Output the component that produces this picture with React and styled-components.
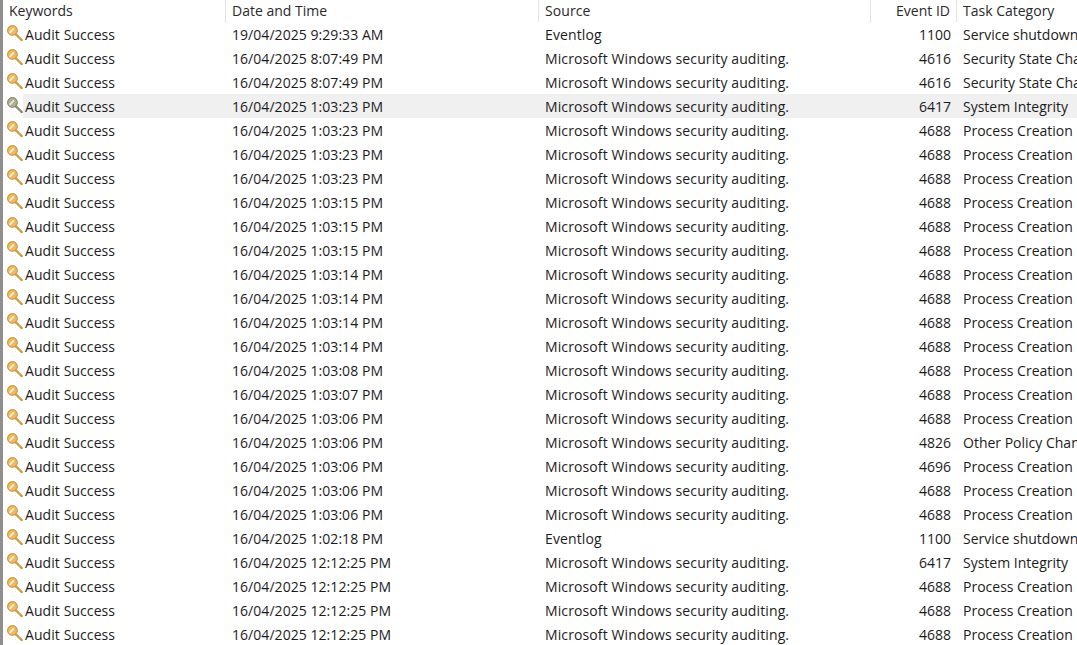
import React from "react";
import styled, { createGlobalStyle } from "styled-components";

const SEC = "Microsoft Windows security auditing.";
const rows = [
  ["19/04/2025 9:29:33 AM", "Eventlog", "1100", "Service shutdown"],
  ["16/04/2025 8:07:49 PM", SEC, "4616", "Security State Change"],
  ["16/04/2025 8:07:49 PM", SEC, "4616", "Security State Change"],
  ["16/04/2025 1:03:23 PM", SEC, "6417", "System Integrity"],
  ["16/04/2025 1:03:23 PM", SEC, "4688", "Process Creation"],
  ["16/04/2025 1:03:23 PM", SEC, "4688", "Process Creation"],
  ["16/04/2025 1:03:23 PM", SEC, "4688", "Process Creation"],
  ["16/04/2025 1:03:15 PM", SEC, "4688", "Process Creation"],
  ["16/04/2025 1:03:15 PM", SEC, "4688", "Process Creation"],
  ["16/04/2025 1:03:15 PM", SEC, "4688", "Process Creation"],
  ["16/04/2025 1:03:14 PM", SEC, "4688", "Process Creation"],
  ["16/04/2025 1:03:14 PM", SEC, "4688", "Process Creation"],
  ["16/04/2025 1:03:14 PM", SEC, "4688", "Process Creation"],
  ["16/04/2025 1:03:14 PM", SEC, "4688", "Process Creation"],
  ["16/04/2025 1:03:08 PM", SEC, "4688", "Process Creation"],
  ["16/04/2025 1:03:07 PM", SEC, "4688", "Process Creation"],
  ["16/04/2025 1:03:06 PM", SEC, "4688", "Process Creation"],
  ["16/04/2025 1:03:06 PM", SEC, "4826", "Other Policy Change Events"],
  ["16/04/2025 1:03:06 PM", SEC, "4696", "Process Creation"],
  ["16/04/2025 1:03:06 PM", SEC, "4688", "Process Creation"],
  ["16/04/2025 1:03:06 PM", SEC, "4688", "Process Creation"],
  ["16/04/2025 1:02:18 PM", "Eventlog", "1100", "Service shutdown"],
  ["16/04/2025 12:12:25 PM", SEC, "6417", "System Integrity"],
  ["16/04/2025 12:12:25 PM", SEC, "4688", "Process Creation"],
  ["16/04/2025 12:12:25 PM", SEC, "4688", "Process Creation"],
  ["16/04/2025 12:12:25 PM", SEC, "4688", "Process Creation"],
];

function KeyIcon({ muted }) {
  const edge = muted ? "#77775f" : "#c28a2e";
  const fill = muted ? "#aeae94" : "#eeb95c";
  const hole = muted ? "#e6e6da" : "#fff0cc";
  return (
    <svg width="17" height="18" viewBox="0 0 17 18">
      <path d="M8.5 9.5 L15.6 16.4" stroke={edge} strokeWidth="2.4" strokeLinecap="round" />
      <path d="M9 10 L15.2 16" stroke={fill} strokeWidth="0.9" />
      <circle cx="5.8" cy="6.3" r="5.2" fill={fill} stroke={edge} strokeWidth="1" />
      <path d="M3.4 8.2 L6.8 4.6" stroke={hole} strokeWidth="2.1" strokeLinecap="round" />
    </svg>
  );
}

export default function App() {
  return (
    <>
      <GlobalStyle />
      <Viewer>
        <Header>
          <HeadCell>Keywords</HeadCell>
          <HeadCell>Date and Time</HeadCell>
          <HeadCell $tracking="0.1px">Source</HeadCell>
          <HeadCell $right>Event ID</HeadCell>
          <HeadCell $last>Task Category</HeadCell>
        </Header>
        {rows.map((r, i) => (
          <Row key={i}>
            <KeywordCell>
              <IconSlot>
                <KeyIcon muted={i === 3} />
              </IconSlot>
              <KeywordText $selected={i === 3}>Audit Success</KeywordText>
            </KeywordCell>
            <Cell $selected={i === 3} $tracking="0.05px">{r[0]}</Cell>
            <Cell $selected={i === 3} $tracking="0.11px">{r[1]}</Cell>
            <Cell $selected={i === 3} $right>{r[2]}</Cell>
            <Cell $selected={i === 3}>{r[3]}</Cell>
          </Row>
        ))}
      </Viewer>
    </>
  );
}

const GlobalStyle = createGlobalStyle`
  html, body {
    margin: 0;
    height: 100%;
    overflow: hidden;
    background: #fff;
  }
`;

const Viewer = styled.div`
  width: 1077px;
  height: 645px;
  box-sizing: border-box;
  overflow: hidden;
  border-left: 3px solid #8f8f8f;
  font-family: "Open Sans", "Liberation Sans", sans-serif;
  font-size: 14px;
  color: #1c1c1c;
`;

const Header = styled.div`
  display: grid;
  grid-template-columns: 223px 313px 332px 86px 1fr;
  height: 22px;
`;

const HeadCell = styled.div`
  display: flex;
  align-items: center;
  justify-content: ${(p) => (p.$right ? "flex-end" : "flex-start")};
  padding: 0 6px 2px 6px;
  border-right: ${(p) => (p.$last ? "none" : "1px solid #e5e5e5")};
  letter-spacing: ${(p) => p.$tracking || "0"};
  white-space: nowrap;
  overflow: hidden;
  box-sizing: border-box;
  color: #2a2a2a;
`;

const Row = styled.div`
  display: grid;
  grid-template-columns: 223px 313px 332px 86px 1fr;
  height: 24px;
`;

const KeywordCell = styled.div`
  display: flex;
  align-items: center;
`;

const IconSlot = styled.div`
  display: flex;
  width: 20px;
  flex: none;
  padding-left: 4px;
  box-sizing: border-box;
  margin-bottom: 2px;
`;

const KeywordText = styled.div`
  flex: 1;
  height: 100%;
  display: flex;
  align-items: center;
  padding-left: 2px;
  letter-spacing: 0.08px;
  background: ${(p) => (p.$selected ? "#f0f0f0" : "transparent")};
  white-space: nowrap;
`;

const Cell = styled.div`
  display: flex;
  align-items: center;
  justify-content: ${(p) => (p.$right ? "flex-end" : "flex-start")};
  padding: 0 6px;
  letter-spacing: ${(p) => p.$tracking || "0"};
  background: ${(p) => (p.$selected ? "#f0f0f0" : "transparent")};
  white-space: nowrap;
  overflow: hidden;
`;
